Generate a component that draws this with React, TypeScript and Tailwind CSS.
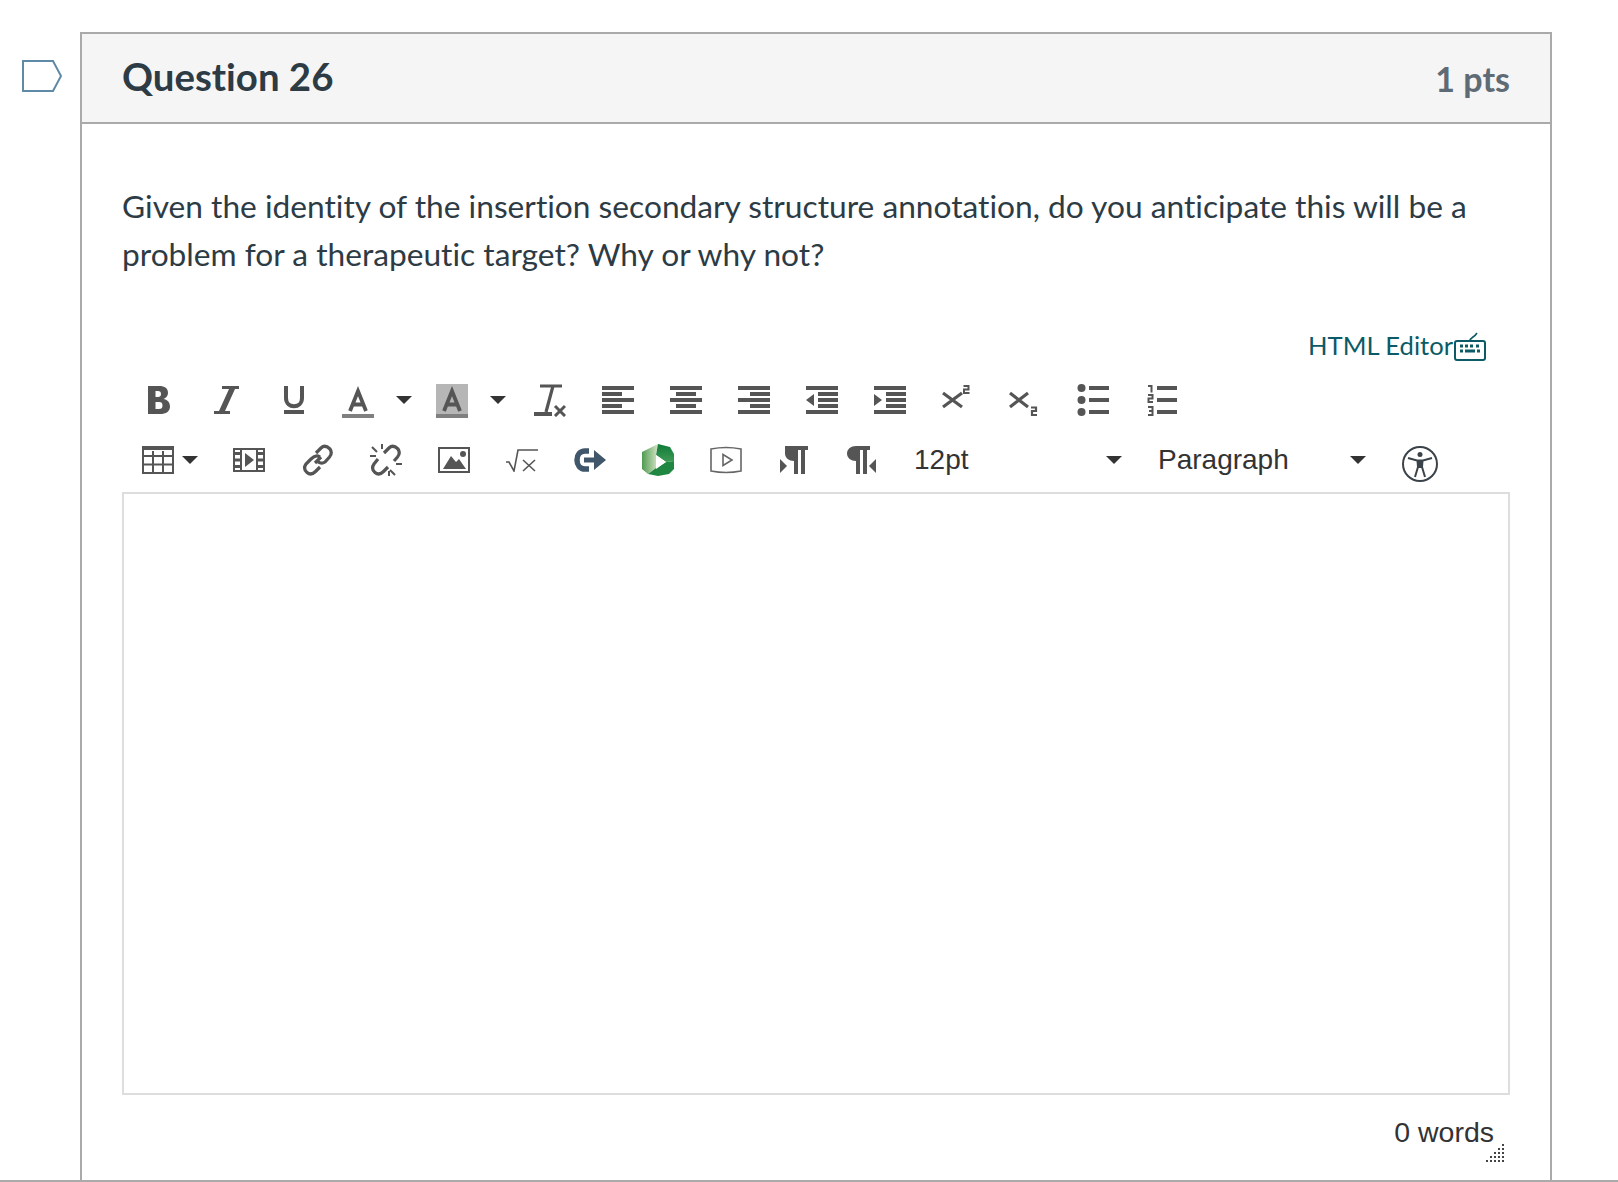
const G = "#555555";

function Caret() {
  return (
    <svg width="16" height="8" viewBox="0 0 16 8">
      <path d="M0 0h16L8 8z" fill="#333" />
    </svg>
  );
}

function Bars({ rows }: { rows: [number, number][] }) {
  return (
    <svg width="32" height="28" viewBox="0 0 32 28" fill={G}>
      {rows.map(([x, w], i) => (
        <rect key={i} x={x} y={i * 6} width={w} height="4" />
      ))}
    </svg>
  );
}

function Icon({ children, h = 32, w = 32 }: { children: React.ReactNode; h?: number; w?: number }) {
  return (
    <svg width={w} height={h} viewBox={`0 0 ${w} ${h}`} fill="none" className="shrink-0">
      {children}
    </svg>
  );
}

function Letter({ bg }: { bg?: boolean }) {
  return (
    <Icon h={34}>
      {bg && <rect width="32" height="30" fill="#b6b6b6" />}
      <path d="M8 27L16 7L24 27M11 20.500H21" stroke={G} strokeWidth="3.800" />
      <rect y="30" width="32" height="4" fill="#808080" />
    </Icon>
  );
}

export default function App() {
  return (
    <div className="flex h-[1182px] w-[1618px] border-b-2 border-[#aaaaaa] bg-white pt-8 font-['Lato','Liberation_Sans',sans-serif] [font-variant-ligatures:none]">
      <div className="w-20 shrink-0 pl-[22px] pt-7">
        <svg width="40" height="32" viewBox="0 0 40 32" fill="none">
          <path d="M1 1H31L39 16L31 31H1Z" stroke="#5f8aa6" strokeWidth="2" />
        </svg>
      </div>

      <div className="w-[1472px] border-x-2 border-t-2 border-[#aaaaaa]">
        <div className="flex h-[90px] items-center justify-between border-b-2 border-[#aaaaaa] bg-[#f5f5f5] px-10">
          <h2 className="pb-[2px] text-[38.400px] font-bold text-[#2d3b45]">Question 26</h2>
          <span className="text-[34px] font-bold text-[#5f6b74]">1 pts</span>
        </div>

        <div className="px-10 pt-[58px]">
          <p className="text-[31.700px] leading-[48px] text-[#2d3b45]">
            Given the identity of the insertion secondary structure annotation, do you anticipate this will be a
            problem for a therapeutic target? Why or why not?
          </p>

          <div className="mt-[42px] flex h-[50px] items-center justify-end pr-[24px]">
            <span className="text-[25.600px] text-[#0b5a66]">HTML Editor</span>
            <svg width="32" height="30" viewBox="0 0 32 30" fill="none" className="mt-1 ml-[1px]">
              <rect x="1" y="9" width="30" height="19" rx="2" stroke="#0b5a66" strokeWidth="2" />
              <path d="M16 9C16 5 20 6 23 1" stroke="#0b5a66" strokeWidth="1.600" />
              <path d="M6 14h3M11 14h3M16 14h3M22 14h3M6 19h3M11 19h10M23 19h3" stroke="#0b5a66" strokeWidth="3" />
            </svg>
          </div>

          <div className="flex h-[60px] items-center pl-5">
            <div className="w-[68px]">
              <Icon>
                <path d="M6 2H17C23 2 26 4.500 26 9C26 12 24 14 21.500 15C25 15.500 28 18 28 22.500C28 27.500 24 30 18 30H6ZM13.500 7V13H16C18 13 19 12 19 10C19 8 18 7 16 7ZM13.500 18V25H17C19.500 25 20.500 24 20.500 21.500C20.500 19 19.500 18 17 18Z" fill={G} fillRule="evenodd" />
              </Icon>
            </div>
            <div className="w-[68px]">
              <Icon>
                <path d="M12 2H29V5H25L15 27H20V30H4V27H9L19 5H12Z" fill={G} />
              </Icon>
            </div>
            <div className="w-[64px]">
              <Icon>
                <path d="M8 2V14C8 25 24 25 24 14V2" stroke={G} strokeWidth="4" />
                <rect x="6" y="26" width="20" height="4" fill={G} />
              </Icon>
            </div>
            <div className="w-[54px] pt-[2px]">
              <Letter />
            </div>
            <div className="w-[40px]">
              <Caret />
            </div>
            <div className="w-[54px] pt-[2px]">
              <Letter bg />
            </div>
            <div className="w-[44px]">
              <Caret />
            </div>
            <div className="w-[68px]">
              <Icon h={34}>
                <path d="M6 3H28M19 3L12 29" stroke={G} strokeWidth="3.200" />
                <rect y="29" width="18" height="4" fill={G} />
                <path d="M21 23L31 33M31 23L21 33" stroke={G} strokeWidth="3" />
              </Icon>
            </div>
            <div className="w-[68px]">
              <Bars rows={[[0, 32], [0, 20], [0, 32], [0, 20], [0, 32]]} />
            </div>
            <div className="w-[68px]">
              <Bars rows={[[0, 32], [6, 20], [0, 32], [6, 20], [0, 32]]} />
            </div>
            <div className="w-[68px]">
              <Bars rows={[[0, 32], [12, 20], [0, 32], [12, 20], [0, 32]]} />
            </div>
            <div className="w-[68px]">
              <Icon h={28}>
                <path d="M0 0h32v4H0zM12 6h20v4H12zM12 12h20v4H12zM12 18h20v4H12zM0 24h32v4H0zM8 8v12L0 14z" fill={G} />
              </Icon>
            </div>
            <div className="w-[66px]">
              <Icon h={28}>
                <path d="M0 0h32v4H0zM12 6h20v4H12zM12 12h20v4H12zM12 18h20v4H12zM0 24h32v4H0zM0 8v12l8-6z" fill={G} />
              </Icon>
            </div>
            <div className="w-[68px]">
              <Icon>
                <path d="M3 9L22 23M22 9L3 23" stroke={G} strokeWidth="3.200" />
                <path d="M23.500 2H28.500V5.500H24V9H29.500" stroke={G} strokeWidth="2" />
              </Icon>
            </div>
            <div className="w-[69px]">
              <Icon>
                <path d="M2 9L20 23M20 9L2 23" stroke={G} strokeWidth="3.200" />
                <path d="M23 23.500H28V27H24V31H29" stroke={G} strokeWidth="2.200" />
              </Icon>
            </div>
            <div className="w-[70px]">
              <Icon>
                <circle cx="4.500" cy="4" r="4" fill={G} />
                <circle cx="4.500" cy="16" r="4" fill={G} />
                <circle cx="4.500" cy="28" r="4" fill={G} />
                <path d="M12 2h20v4H12zM12 14h20v4H12zM12 26h20v4H12z" fill={G} />
              </Icon>
            </div>
            <Icon>
              <path d="M1 2H4.500V8.500M1 11H5.500V14.500H1.500V18H6M1 23H5.500V27H2M5.500 27V31H1" stroke={G} strokeWidth="2" />
              <path d="M10 2h20v4H10zM10 14h20v4H10zM10 26h20v4H10z" fill={G} />
            </Icon>
          </div>

          <div className="flex h-[60px] items-center pl-5 text-[28px] text-[#333] font-['Liberation_Sans',sans-serif]">
            <svg width="32" height="28" viewBox="0 0 32 28" fill="none" className="mr-2 shrink-0">
              <path d="M1 1h30v26H1zM1 10h30M1 18.500h30M11 5v22M21 5v22" stroke={G} strokeWidth="2" />
              <rect width="32" height="4" fill={G} />
            </svg>
            <div className="w-[51px]">
              <Caret />
            </div>
            <div className="w-[69px]">
              <Icon h={24}>
                <path d="M1 1h30v22H1z" stroke={G} strokeWidth="2" />
                <path d="M8 1v22M24 1v22" stroke={G} strokeWidth="2" />
                <path d="M2 5.500h5M2 12h5M2 18.500h5M25 5.500h5M25 12h5M25 18.500h5" stroke={G} strokeWidth="3" />
                <path d="M12 5v14l9-7z" fill={G} />
              </Icon>
            </div>
            <div className="w-[68px]">
              <Icon>
                <path d="M13 19L19 13M14 9L19 4C22 1 25 2 28 5C30 8 30 10 27.500 13L23 18C20 20 17 19 15.500 17M18 13C15 11 12 12 9 15L4 20C2 23 2 26 5 28.500C8 31 11 30 13.500 27.500L18 23" stroke={G} strokeWidth="3.200" />
              </Icon>
            </div>
            <div className="w-[68px]">
              <Icon>
                <path d="M14 9L19 4C22 1 25 2 28 5C30 8 30 10 27.500 13L24 17M18 23L13.500 27.500C11 30 8 31 5 28.500C2 26 2 23 4 20L8 15" stroke={G} strokeWidth="3.200" />
                <path d="M2 3L7 8M12 0V5M0 12H6M26 20H32M20 26L25 31M19 27V32" stroke={G} strokeWidth="2" />
              </Icon>
            </div>
            <div className="w-[68px]">
              <Icon h={26}>
                <path d="M1 1h30v24H1z" stroke={G} strokeWidth="2" />
                <path d="M5 22L13 9L18 15L21 12L28 22z" fill={G} />
                <circle cx="25" cy="7" r="3" fill={G} />
              </Icon>
            </div>
            <div className="w-[68px]">
              <Icon h={24}>
                <path d="M0 14H3L8 23L12 2H32M17 12L29 23M29 12L17 23" stroke={G} strokeWidth="1.600" />
              </Icon>
            </div>
            <div className="w-[68px]">
              <Icon h={26}>
                <path d="M15 4H11C6 4 3 8 3 13C3 18 6 22 11 22H15" stroke="#3f566b" strokeWidth="5.500" />
                <path d="M10 13H23" stroke="#3f566b" strokeWidth="5" />
                <path d="M20 3L32 13L20 23z" fill="#3f566b" />
              </Icon>
            </div>
            <div className="w-[68px]">
              <svg width="32" height="32" viewBox="0 0 32 32" className="shrink-0">
                <defs>
                  <linearGradient id="panoptoA" x1="0" y1="0" x2="1" y2="0">
                    <stop offset="0" stopColor="#4f9a4f" />
                    <stop offset="1" stopColor="#d5e5c8" />
                  </linearGradient>
                  <linearGradient id="panoptoB" x1="0" y1="0" x2="0" y2="1">
                    <stop offset="0" stopColor="#0f7a3a" />
                    <stop offset="1" stopColor="#3f9a55" />
                  </linearGradient>
                </defs>
                <path d="M0 8L16 0L14 11V24L6 30L0 25Z" fill="url(#panoptoA)" />
                <path d="M16 0L28 3L32 10V17L24 18L14 11Z" fill="url(#panoptoB)" />
                <path d="M24 18L32 17V25L27 30L16 32L6 30L14 24Z" fill="#1f8741" />
                <path d="M14 11L24 18L14 25Z" fill="#fff" />
              </svg>
            </div>
            <div className="w-[70px]">
              <Icon h={28}>
                <path d="M1 3Q16 0 31 3V25Q16 28 1 25Z" stroke="#666" strokeWidth="1.600" />
                <path d="M13 8.500L22 14L13 19.500Z" stroke="#666" strokeWidth="1.600" />
              </Icon>
            </div>
            <div className="w-[66px]">
              <Icon w={28} h={28}>
                <path d="M5 0H28V4H25V28H21V4H18V28H14V15C9 15 5 12 5 7.500C5 5 5 2 5 0Z" fill={G} />
                <path d="M0 13L7 20L0 27Z" fill={G} />
              </Icon>
            </div>
            <div className="w-[68px]">
              <Icon w={30} h={28}>
                <path d="M1 7.500C1 3 5 0 10 0H24V4H21V28H17V4H14V28H10V15C5 15 1 12 1 7.500Z" fill={G} />
                <path d="M30 13L23 20L30 27Z" fill={G} />
              </Icon>
            </div>
            <span className="w-[192px]">12pt</span>
            <div className="w-[52px]">
              <Caret />
            </div>
            <span className="w-[192px]">Paragraph</span>
            <div className="w-[52px]">
              <Caret />
            </div>
            <svg width="36" height="36" viewBox="0 0 36 36" fill="none" className="mt-2 shrink-0">
              <circle cx="18" cy="18" r="17" stroke="#3a434a" strokeWidth="2" />
              <circle cx="18" cy="8.500" r="2.500" fill="#3a434a" />
              <path d="M6 12L15 14.500H21L30 12M15.500 14.500L16 21L13 31M20.500 14.500L20 21L23 31" stroke="#3a434a" strokeWidth="2" />
              <path d="M18 14V22" stroke="#3a434a" strokeWidth="5" />
            </svg>
          </div>

          <div className="mt-[2px] h-[603px] w-[1388px] border-2 border-[#dddddd]" />

          <div className="relative mt-[21px] w-[1388px] pr-4 text-right text-[28.500px] leading-8 text-[#333] font-['Liberation_Sans',sans-serif]">
            0 words
            <svg width="20" height="20" viewBox="0 0 20 20" className="absolute right-[5px] top-[27px]">
              <path d="M17 1h2v2h-2zM17 5h2v2h-2zM13 5h2v2h-2zM17 9h2v2h-2zM13 9h2v2h-2zM9 9h2v2H9zM17 13h2v2h-2zM13 13h2v2h-2zM9 13h2v2H9zM5 13h2v2H5zM17 17h2v2h-2zM13 17h2v2h-2zM9 17h2v2H9zM5 17h2v2H5zM1 17h2v2H1z" fill="#444" />
            </svg>
          </div>
        </div>
      </div>
    </div>
  );
}
